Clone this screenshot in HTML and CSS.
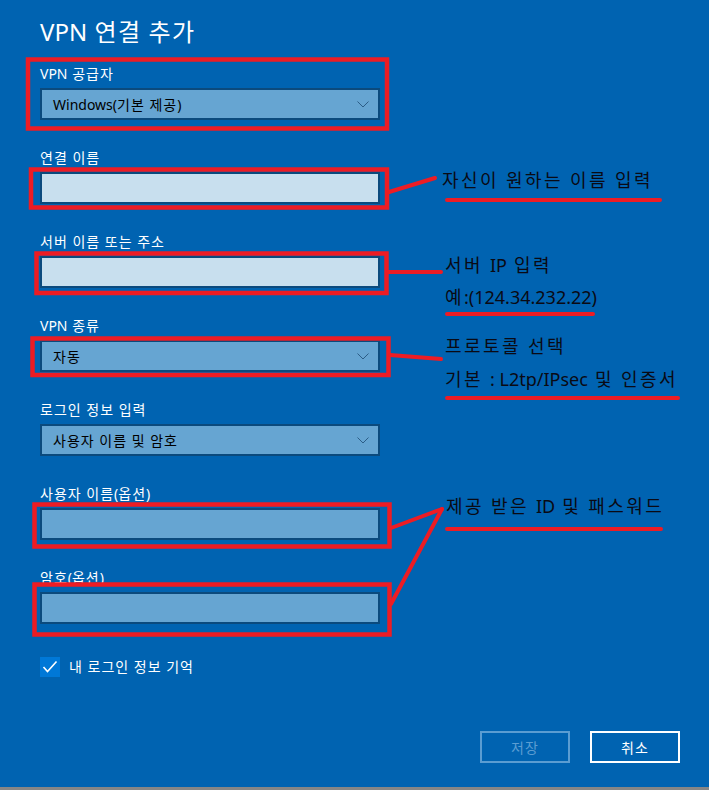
FILE: index.html
```html
<!DOCTYPE html>
<html lang="ko">
<head>
    <meta charset="UTF-8">
    <meta name="viewport" content="width=device-width, initial-scale=1.0">
    <title>VPN 연결 추가</title>
    <link rel="stylesheet" href="styles.css">
</head>
<body>
    <div class="dialog">
        <h1 class="title"><span class="en">VPN</span> 연결 추가</h1>

        <div class="group">
            <div class="label"><span class="en">VPN</span> 공급자</div>
            <div class="select">
                <span><span class="en">Windows(</span>기본 제공<span class="en">)</span></span>
                <svg class="chevron" width="12" height="7" viewBox="0 0 12 7"><polyline points="0.5,0.5 6,6 11.5,0.5" /></svg>
            </div>
        </div>

        <div class="group">
            <div class="label">연결 이름</div>
            <div class="input light"></div>
        </div>

        <div class="group">
            <div class="label">서버 이름 또는 주소</div>
            <div class="input light"></div>
        </div>

        <div class="group">
            <div class="label"><span class="en">VPN</span> 종류</div>
            <div class="select">
                <span>자동</span>
                <svg class="chevron" width="12" height="7" viewBox="0 0 12 7"><polyline points="0.5,0.5 6,6 11.5,0.5" /></svg>
            </div>
        </div>

        <div class="group">
            <div class="label">로그인 정보 입력</div>
            <div class="select">
                <span>사용자 이름 및 암호</span>
                <svg class="chevron" width="12" height="7" viewBox="0 0 12 7"><polyline points="0.5,0.5 6,6 11.5,0.5" /></svg>
            </div>
        </div>

        <div class="group">
            <div class="label">사용자 이름<span class="en">(</span>옵션<span class="en">)</span></div>
            <div class="input"></div>
        </div>

        <div class="group">
            <div class="label">암호<span class="en">(</span>옵션<span class="en">)</span></div>
            <div class="input"></div>
        </div>

        <div class="check-row">
            <span class="checkbox">
                <svg width="20" height="20" viewBox="0 0 20 20"><polyline points="3.5,10 7.5,14.5 16.5,4.5" /></svg>
            </span>
            <span>내 로그인 정보 기억</span>
        </div>

        <div class="buttons">
            <button class="btn disabled">저장</button>
            <button class="btn">취소</button>
        </div>
    </div>
    <div class="taskbar"></div>

    <!-- red pen notes drawn on top of the dialog -->
    <svg class="marks" width="709" height="790" viewBox="0 0 709 790">
        <g fill="none" stroke="#ed1c24" stroke-width="4.5">
            <rect x="28" y="59.5" width="359" height="69" />
            <rect x="31" y="169.5" width="356" height="38" />
            <rect x="36.5" y="253.5" width="350" height="39.5" />
            <rect x="32.5" y="338.5" width="356" height="36.5" />
            <rect x="34.5" y="504.5" width="355" height="42" />
            <rect x="34.5" y="584.5" width="355" height="50" />
        </g>
        <g stroke="#ed1c24" stroke-width="4" stroke-linecap="round">
            <line x1="389" y1="192" x2="435" y2="178" />
            <line x1="388" y1="272" x2="441" y2="272" />
            <line x1="390" y1="355" x2="441" y2="359" />
            <line x1="391" y1="528" x2="442" y2="509" />
            <line x1="391" y1="604" x2="442" y2="509" />
            <line x1="447" y1="200" x2="660" y2="200" />
            <line x1="447" y1="314" x2="593" y2="314" />
            <line x1="447" y1="398" x2="678" y2="398" />
            <line x1="447" y1="529" x2="661" y2="529" />
        </g>
    </svg>
    <div class="note" style="left: 442px; top: 168px;">자신이 원하는 이름 입력</div>
    <div class="note" style="left: 445px; top: 253px;">서버 <span class="en">IP</span> 입력</div>
    <div class="note" style="left: 445px; top: 285px;">예<span class="en">:(124.34.232.22)</span></div>
    <div class="note" style="left: 445px; top: 334px;">프로토콜 선택</div>
    <div class="note" style="left: 445px; top: 367px;">기본 <span class="en">: L2tp/IPsec</span> 및 인증서</div>
    <div class="note" style="left: 446px; top: 494px;">제공 받은 <span class="en">ID</span> 및 패스워드</div>
</body>
</html>
```

FILE: styles.css
```css
body {
    margin: 0;
    width: 709px;
    height: 790px;
    background: #0063b1;
    font-family: "Noto Sans", "Noto Sans CJK KR", sans-serif;
    color: #fff;
    overflow: hidden;
    position: relative;
}

/* hangul runs a bit wider than latin, so spacing goes on the text and latin resets it */
.en {
    letter-spacing: 0;
}

.dialog {
    height: 787px;
    padding: 16px 0 0 40px;
    box-sizing: border-box;
}

.title {
    margin: 0 0 16px;
    font-size: 24px;
    font-weight: normal;
    line-height: 32px;
    letter-spacing: 1.2px;
}

.group {
    margin-bottom: 28px;
}

.label {
    font-size: 14px;
    line-height: 20px;
    margin-bottom: 4px;
    letter-spacing: 1px;
}

.select,
.input {
    width: 340px;
    height: 32px;
    box-sizing: border-box;
    border: 2px solid #0b4a7d;
    background: #66a5d2;
    color: #000;
}

.input.light {
    background: #c8dfee;
}

.select {
    display: flex;
    align-items: center;
    justify-content: space-between;
    padding: 0 9px 0 11px;
    font-size: 14px;
    letter-spacing: 1px;
}

.chevron polyline {
    fill: none;
    stroke: #2c5d86;
    stroke-width: 1;
}

.check-row {
    display: flex;
    align-items: center;
    gap: 9px;
    margin-top: 33px;
    font-size: 14px;
    line-height: 20px;
    letter-spacing: 1px;
}

.checkbox {
    width: 20px;
    height: 20px;
    background: #0078d7;
}

.checkbox svg {
    display: block;
}

.checkbox polyline {
    fill: none;
    stroke: #fff;
    stroke-width: 1.6;
}

.buttons {
    display: flex;
    justify-content: flex-end;
    gap: 20px;
    margin-top: 54px;
    padding-right: 29px;
}

.btn {
    width: 90px;
    height: 32px;
    border: 2px solid #fff;
    background: transparent;
    color: #fff;
    font-family: inherit;
    font-size: 14px;
    letter-spacing: 1px;
    padding: 0;
}

.btn.disabled {
    border-color: #5b9dd2;
    color: #5b9dd2;
}

.taskbar {
    height: 3px;
    background: #868686;
}

.marks {
    position: absolute;
    left: 0;
    top: 0;
    pointer-events: none;
}

.note {
    position: absolute;
    font-size: 18px;
    line-height: 24px;
    letter-spacing: 2.4px;
    color: #0a0a14;
    white-space: nowrap;
}
```
